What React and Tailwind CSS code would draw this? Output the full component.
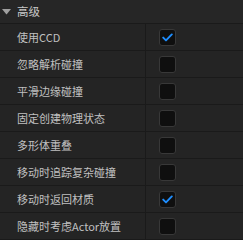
const rows = [
  { label: "使用CCD", checked: true },
  { label: "忽略解析碰撞", checked: false },
  { label: "平滑边缘碰撞", checked: false },
  { label: "固定创建物理状态", checked: false },
  { label: "多形体重叠", checked: false },
  { label: "移动时追踪复杂碰撞", checked: false },
  { label: "移动时返回材质", checked: true },
  { label: "隐藏时考虑Actor放置", checked: false },
];

function Checkbox({ checked }) {
  return (
    <div className="w-[17px] h-[17px] rounded-[3px] bg-[#0f0f0f] border border-[#383838] flex items-center justify-center">
      {checked && (
        <svg width="11" height="9" viewBox="0 0 11 9" fill="none">
          <path d="M1.2 4.6 L4 7.4 L9.8 1.4" stroke="#1e8eff" strokeWidth="1.9" strokeLinecap="round" strokeLinejoin="round" />
        </svg>
      )}
    </div>
  );
}

export default function App() {
  return (
    <div
      className="w-[243px] h-[240px] bg-[#242424] text-[#c0c0c0] overflow-hidden text-[11px]"
      style={{ fontFamily: '"Noto Sans CJK SC", "Liberation Sans", sans-serif' }}
    >
      {/* Header */}
      <div className="h-[24px] flex items-center bg-[#262626] border-b border-[#1a1a1a]">
        <svg width="9" height="6" viewBox="0 0 9 6" className="ml-[2px] mr-[6px]">
          <path d="M0 0 H9 L4.5 5.5 Z" fill="#a0a0a0" />
        </svg>
        <span className="text-[11.5px] text-[#c8c8c8]">高级</span>
      </div>

      {/* Rows */}
      {rows.map((r) => (
        <div key={r.label} className="h-[27px] flex border-b border-[#1a1a1a]">
          <div className="w-[146px] flex items-center pl-[17px] border-r border-[#1a1a1a]">
            {r.label}
          </div>
          <div className="flex-1 flex items-center pl-[13px]">
            <Checkbox checked={r.checked} />
          </div>
        </div>
      ))}
    </div>
  );
}
